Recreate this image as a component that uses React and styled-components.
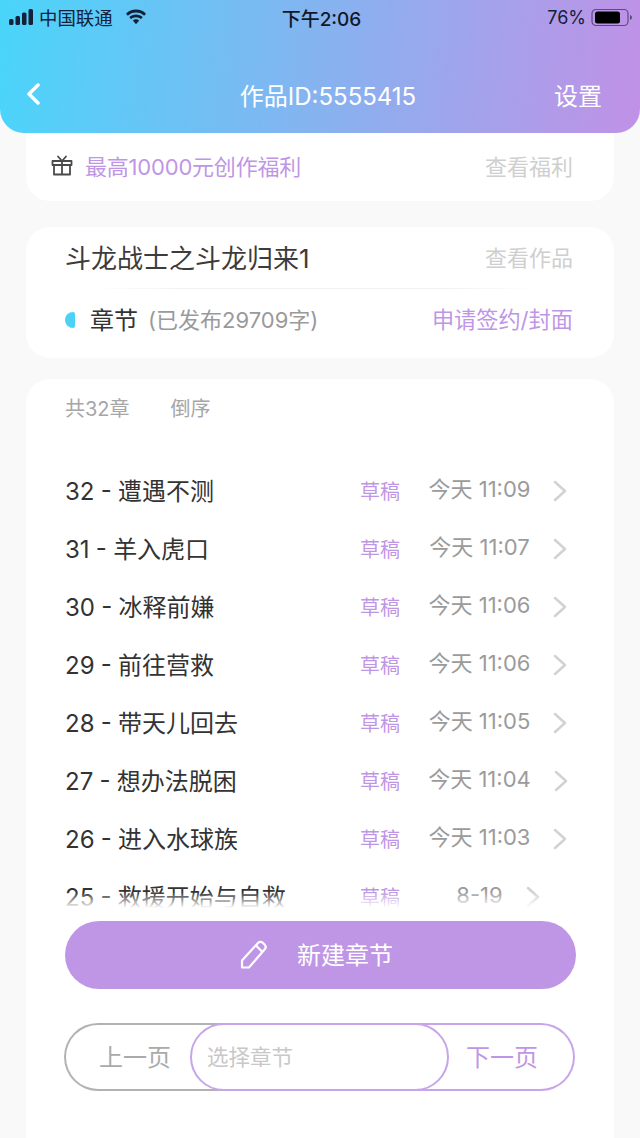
import React from "react";
import styled, { createGlobalStyle } from "styled-components";

const purple = "#bf96e6";
const sans = `Inter, "Noto Sans CJK SC", sans-serif`;

const chapters = [
  { title: "32 - 遭遇不测", time: "今天 11:09" },
  { title: "31 - 羊入虎口", time: "今天 11:07" },
  { title: "30 - 冰释前嫌", time: "今天 11:06" },
  { title: "29 - 前往营救", time: "今天 11:06" },
  { title: "28 - 带天儿回去", time: "今天 11:05" },
  { title: "27 - 想办法脱困", time: "今天 11:04" },
  { title: "26 - 进入水球族", time: "今天 11:03" },
  { title: "25 - 救援开始与自救", time: "8-19" },
];

const GlobalStyle = createGlobalStyle`
  html, body {
    margin: 0;
    padding: 0;
    background: #f9f9f9;
  }
  * {
    box-sizing: border-box;
  }
`;

const Page = styled.div`
  width: 640px;
  height: 1138px;
  overflow: hidden;
  background: #f9f9f9;
  font-family: ${sans};
`;

const Header = styled.header`
  position: relative;
  z-index: 2;
  height: 133px;
  border-radius: 0 0 24px 24px;
  background: linear-gradient(96deg, #4ad5fa 0%, #c191e6 100%);
`;

const StatusBar = styled.div`
  height: 34px;
  padding: 0 7px 0 9px;
  display: grid;
  grid-template-columns: 1fr auto 1fr;
  align-items: center;
  font-size: 18px;
  color: #14213a;
`;

const StatusLeft = styled.div`
  display: flex;
  align-items: center;
  gap: 4px;
  font-size: 18.4px;
`;

const StatusTime = styled.span`
  font-size: 19px;
  font-weight: 500;
  color: #101828;
  margin-left: 1px;
`;

const StatusRight = styled.div`
  display: flex;
  align-items: center;
  justify-content: flex-end;
  gap: 5px;
`;

const Wifi = styled.svg`
  margin-left: 8px;
`;

const Nav = styled.div`
  height: 62px;
  margin-top: 29px;
  padding: 0 38px 0 26px;
  display: flex;
  align-items: center;
  justify-content: space-between;
  color: #fff;
  font-size: 24px;
`;

const Back = styled.div`
  width: 76px;
  display: flex;
`;

const Content = styled.main`
  padding: 0 26px;
  margin-top: -24px;
  display: flex;
  flex-direction: column;
`;

const Card = styled.section`
  background: #fff;
  border-radius: 24px;
  margin-bottom: ${(props) => props.$gap || 0}px;
`;

const BonusCard = styled(Card)`
  height: 92px;
  padding: 24px 41px 4px 25px;
  display: flex;
  align-items: center;
  justify-content: space-between;
`;

const BonusText = styled.div`
  display: flex;
  align-items: center;
  gap: 12px;
  color: ${purple};
  font-size: 22px;
  letter-spacing: -0.2px;
`;

const MutedLink = styled.div`
  color: #cfcfcf;
  font-size: 22px;
`;

const WorkCard = styled(Card)`
  height: 131px;
  padding: 0 41px 0 39px;
`;

const WorkTop = styled.div`
  height: 62px;
  padding-bottom: 4px;
  position: relative;
  display: flex;
  align-items: center;
  justify-content: space-between;
  &::after {
    content: "";
    position: absolute;
    left: 30px;
    right: 37px;
    bottom: 0;
    height: 1px;
    background: linear-gradient(90deg, #fff, #f1f1f1 20%, #f1f1f1 80%, #fff);
  }
`;

const WorkTitle = styled.div`
  color: #3c3c3c;
  font-size: 26px;
`;

const WorkBottom = styled.div`
  height: 62px;
  padding-bottom: 4px;
  display: flex;
  align-items: center;
`;

const Marker = styled.span`
  width: 10px;
  height: 16px;
  margin-top: 4px;
  border-radius: 8px 2px 2px 8px;
  background: #4cd2f5;
`;

const SectionName = styled.span`
  margin-left: 15px;
  color: #333;
  font-size: 24px;
`;

const Published = styled.span`
  margin-left: 10px;
  color: #9a9a9a;
  font-size: 22px;
`;

const Apply = styled.span`
  margin-left: auto;
  color: ${purple};
  font-size: 22.2px;
`;

const ListCard = styled(Card)`
  height: 900px;
  padding: 15px 37px 0 39px;
`;

const ListHead = styled.div`
  height: 28px;
  padding-bottom: 2px;
  display: flex;
  align-items: center;
  gap: 41px;
  color: #a6a6a6;
  font-size: 20px;
`;

const List = styled.div`
  position: relative;
  height: 446px;
  margin-top: 40px;
  overflow: hidden;
  &::after {
    content: "";
    position: absolute;
    left: 0;
    right: 0;
    bottom: 0;
    height: 16px;
    background: linear-gradient(rgba(255, 255, 255, 0), #fff);
  }
`;

const Row = styled.div`
  height: 58px;
  display: grid;
  grid-template-columns: 295px 40px 17px 160px;
  align-items: center;
`;

const RowTitle = styled.div`
  color: #333;
  font-size: 24px;
  word-spacing: -0.5px;
  white-space: nowrap;
  padding-bottom: 4px;
`;

const RowStatus = styled.div`
  grid-column: 2;
  color: ${purple};
  font-size: 20px;
  white-space: nowrap;
  padding-bottom: 2px;
`;

const RowMeta = styled.div`
  grid-column: 4;
  display: flex;
  align-items: center;
  justify-content: center;
  gap: 23px;
  padding-left: 2px;
`;

const RowTime = styled.div`
  color: #9b9b9b;
  font-size: 22px;
  line-height: 30px;
  white-space: nowrap;
  padding-bottom: 4px;
`;

const NewButton = styled.button`
  width: 511px;
  height: 68px;
  margin: 13px 0 0 0;
  border: none;
  border-radius: 34px;
  background: ${purple};
  color: #fff;
  font-family: ${sans};
  font-size: 24px;
  display: flex;
  align-items: center;
  justify-content: center;
  gap: 29px;
  padding: 0 8px 0 0;
  span {
    padding-bottom: 4px;
  }
`;

const Pager = styled.div`
  width: 511px;
  height: 68px;
  margin: 34px 0 0 -1px;
  display: flex;
  font-size: 24px;
`;

const PrevPage = styled.div`
  width: 160px;
  border: 2px solid #b2b2b2;
  border-right: none;
  border-radius: 34px 0 0 34px;
  color: #aaa;
  padding: 0 0 4px 33px;
  display: flex;
  align-items: center;
`;

const ChapterPicker = styled.div`
  position: relative;
  width: 259px;
  margin-left: -34px;
  background: #fff;
  border: 2px solid #c7a5ea;
  border-radius: 34px;
  color: #c8c8c8;
  font-size: 21.5px;
  padding: 0 0 4px 15px;
  display: flex;
  align-items: center;
`;

const NextPage = styled.div`
  flex: 1;
  margin-left: -34px;
  border: 2px solid #c7a5ea;
  border-left: none;
  border-radius: 0 34px 34px 0;
  color: ${purple};
  padding: 0 0 4px 51px;
  display: flex;
  align-items: center;
`;

const Chevron = () => (
  <svg width="14" height="22" viewBox="0 0 14 22" fill="none">
    <path d="M2 2l10 9-10 9" stroke="#d2d2d2" strokeWidth="2.500" strokeLinecap="round" strokeLinejoin="round" />
  </svg>
);

const App = () => {
  return (
    <Page>
      <GlobalStyle />
      <Header>
        <StatusBar>
          <StatusLeft>
            <svg width="26" height="16" viewBox="0 0 26 16" fill="#14213a">
              <rect x="0" y="10" width="4.500" height="6" rx="1.500" />
              <rect x="6.500" y="7" width="4.500" height="9" rx="1.500" />
              <rect x="13" y="3.500" width="4.500" height="12.500" rx="1.500" />
              <rect x="19.500" y="0" width="4.500" height="16" rx="1.500" />
            </svg>
            <span>中国联通</span>
            <Wifi width="22" height="16" viewBox="0 0 22 16" fill="#14213a">
              <path d="M11 3.500c3.200 0 6.100 1.200 8.200 3.300l1.800-2.100C18.400 2.100 14.900.6 11 .6S3.600 2.100 1 4.700l1.800 2.100C4.900 4.700 7.800 3.500 11 3.500z" />
              <path d="M11 8.300c1.900 0 3.600.7 4.900 1.900l1.800-2.100C15.900 6.400 13.600 5.400 11 5.400s-4.900 1-6.700 2.700l1.800 2.100c1.300-1.200 3-1.900 4.900-1.900z" />
              <path d="M11 10.200c-1.200 0-2.300.5-3.200 1.200l3.200 3.800 3.200-3.800c-.9-.7-2-1.200-3.200-1.200z" />
            </Wifi>
          </StatusLeft>
          <StatusTime>下午2:06</StatusTime>
          <StatusRight>
            <span>76%</span>
            <svg width="42" height="19" viewBox="0 0 42 19" fill="none">
              <rect x="1" y="1.500" width="36" height="16" rx="4" stroke="#5c4a80" strokeWidth="1.200" />
              <rect x="4" y="3.500" width="25" height="12" rx="2.500" fill="#000" />
              <path d="M39 7c1.200.4 2 1.400 2 2.500s-.8 2.100-2 2.500z" fill="#5c4a80" />
            </svg>
          </StatusRight>
        </StatusBar>
        <Nav>
          <Back>
            <svg width="14" height="24" viewBox="0 0 14 24" fill="none">
              <path d="M12 3L3 12l9 9" stroke="#fff" strokeWidth="3.500" strokeLinecap="round" strokeLinejoin="round" />
            </svg>
          </Back>
          <span>作品ID:5555415</span>
          <span>设置</span>
        </Nav>
      </Header>
      <Content>
        <BonusCard $gap={26}>
          <BonusText>
            <svg width="22" height="22" viewBox="0 0 22 22" fill="none" stroke="#4a4a4a" strokeWidth="1.800" strokeLinejoin="round">
              <path d="M1.500 7h19v4h-19zM3 11h16v9.500H3zM11 7v13.500" />
              <path d="M11 7L7 2.500M11 7l4-4.500" strokeLinecap="round" />
            </svg>
            <span>最高10000元创作福利</span>
          </BonusText>
          <MutedLink>查看福利</MutedLink>
        </BonusCard>
        <WorkCard $gap={21}>
          <WorkTop>
            <WorkTitle>斗龙战士之斗龙归来1</WorkTitle>
            <MutedLink>查看作品</MutedLink>
          </WorkTop>
          <WorkBottom>
            <Marker />
            <SectionName>章节</SectionName>
            <Published>(已发布29709字)</Published>
            <Apply>申请签约/封面</Apply>
          </WorkBottom>
        </WorkCard>
        <ListCard>
          <ListHead>
            <span>共32章</span>
            <span>倒序</span>
          </ListHead>
          <List>
            {chapters.map((item) => (
              <Row key={item.title}>
                <RowTitle>{item.title}</RowTitle>
                <RowStatus>草稿</RowStatus>
                <RowMeta>
                  <RowTime>{item.time}</RowTime>
                  <Chevron />
                </RowMeta>
              </Row>
            ))}
          </List>
          <NewButton>
            <svg width="28" height="30" viewBox="0 0 28 30" fill="none" stroke="#fff" strokeWidth="2.200" strokeLinejoin="round">
              <path d="M2 27.500v-7L18 3c1.500-1.500 3.500-1.500 5 0l1.500 1.500c1.500 1.500 1.500 3.500 0 5L9 27.500z" />
              <path d="M16 5.500l6.500 6.500" />
            </svg>
            <span>新建章节</span>
          </NewButton>
          <Pager>
            <PrevPage>上一页</PrevPage>
            <ChapterPicker>选择章节</ChapterPicker>
            <NextPage>下一页</NextPage>
          </Pager>
        </ListCard>
      </Content>
    </Page>
  );
};

export default App;
